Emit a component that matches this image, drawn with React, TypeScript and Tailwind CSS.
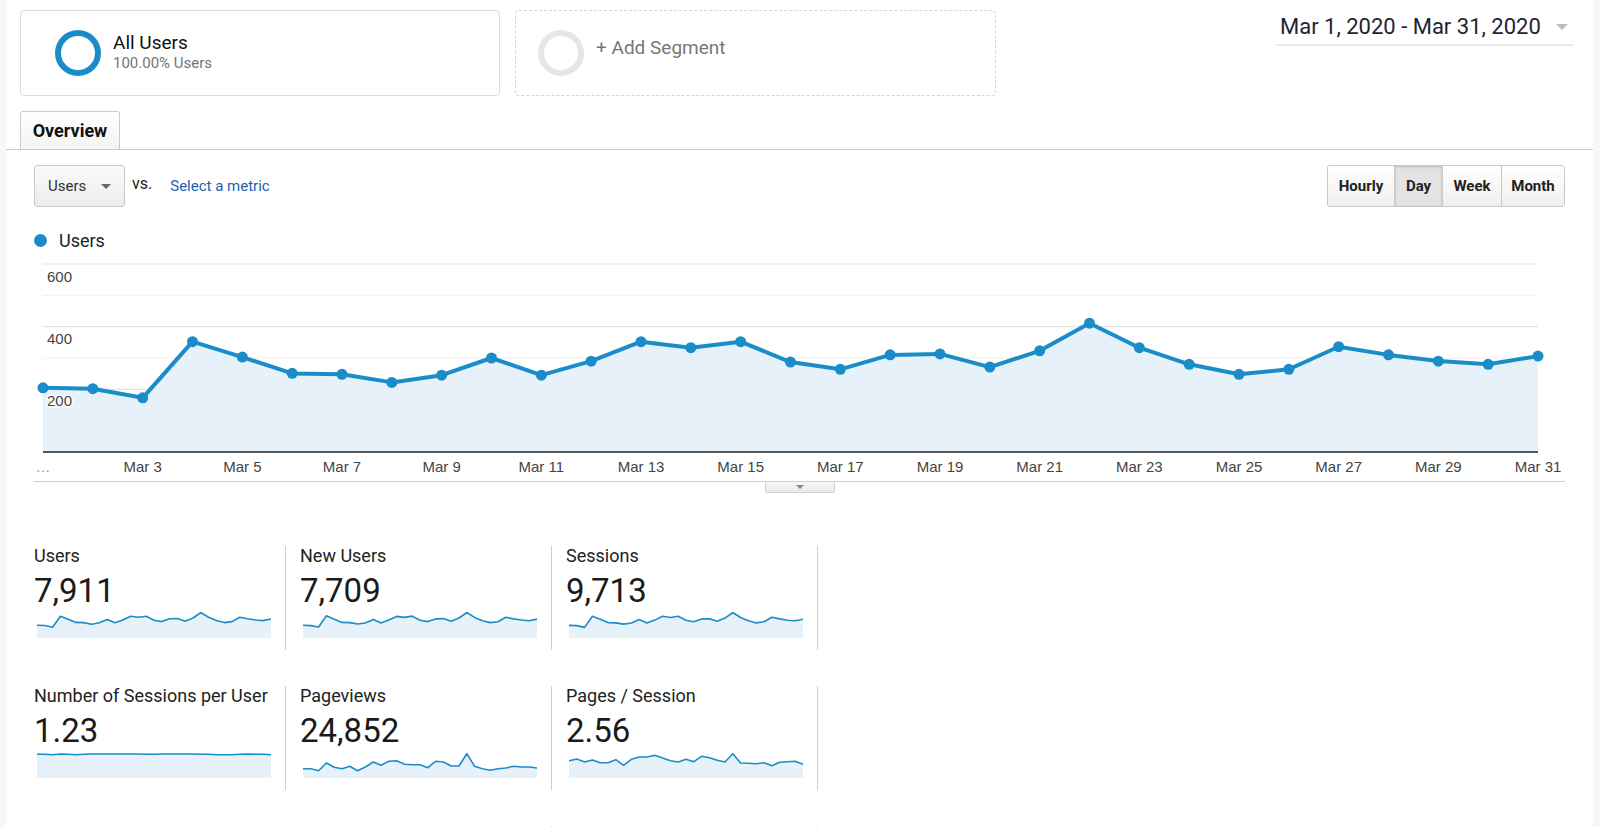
import React from "react";

const users = [205, 202, 173, 352, 303, 251, 248, 222, 245, 300, 245, 290, 352, 333, 352, 287, 264, 310, 313, 271, 323, 411, 333, 280, 248, 264, 336, 310, 290, 280, 306];
const newUsers = [205, 198, 176, 355, 300, 250, 246, 224, 240, 296, 242, 288, 345, 330, 350, 284, 262, 305, 310, 268, 320, 408, 330, 276, 246, 260, 332, 306, 288, 276, 302];
const sessions = [250, 245, 210, 430, 370, 305, 300, 275, 298, 365, 300, 355, 430, 405, 430, 350, 320, 378, 382, 330, 395, 505, 405, 340, 300, 320, 410, 378, 352, 340, 372];

const norm = (arr: number[]) => {
  const m = Math.max(...arr);
  return arr.map((v) => (25.5 * v) / m);
};

const spu = [23.7, 23.7, 23.3, 24, 23.7, 23.3, 23.7, 24, 24, 24, 24, 24, 24, 24, 23.7, 23.7, 24, 24, 24, 24, 24, 23.7, 23.7, 23.3, 23.3, 23.3, 23.7, 24, 23.7, 23.7, 23.3];
const pageviews = [9.3, 9.3, 7.3, 15, 10.7, 9.3, 11.7, 7.3, 11, 16, 12.7, 16.7, 17.3, 13.7, 13.3, 13.3, 10.3, 16.7, 16, 12, 12, 24.3, 11.7, 9.3, 7.7, 9.3, 10, 11.7, 11, 11, 10];
const pps = [17.3, 19, 16, 18, 15.3, 15.3, 18.3, 12.7, 18.7, 21, 21, 22.7, 20, 17.3, 16, 18.7, 16.3, 21.7, 20.3, 17.7, 16, 24.3, 15, 14.7, 14.3, 15.3, 12.3, 15.7, 16.3, 16.7, 13.7];

const X0 = 9;
const X1 = 1504;
const BASE = 197;
const px = (i: number) => X0 + (i * (X1 - X0)) / 30;
const py = (v: number) => BASE - (v * 188) / 600;

function MainChart() {
  const pts = users.map((v, i) => [px(i), py(v)]);
  const line = pts.map((p, i) => `${i ? "L" : "M"}${p[0].toFixed(1)},${p[1].toFixed(1)}`).join(" ");
  const area = `${line} L${X1},${BASE} L${X0},${BASE} Z`;
  const grid = [6, 5, 4, 3, 2, 1].map((k) => ({ k, y: BASE - (k * 188) / 6 }));
  const labelFont = "'Liberation Sans', Arial, sans-serif";
  return (
    <svg width={1531} height={226} viewBox="0 0 1531 226" className="block">
      {grid.map((g) => (
        <line key={g.k} x1={X0} x2={X1} y1={g.y} y2={g.y} stroke={g.k % 2 === 0 ? "#e4e4e4" : "#f2f2f2"} strokeWidth={1.2} />
      ))}
      <path d={area} fill="#e6f1f9" />
      <line x1={X0} x2={X1} y1={BASE} y2={BASE} stroke="#222" strokeWidth={1.6} />
      <path d={line} fill="none" stroke="#1a8dc8" strokeWidth={4} strokeLinejoin="round" strokeLinecap="round" />
      {pts.map((p, i) => (
        <circle key={i} cx={p[0]} cy={p[1]} r={5.5} fill="#1a8dc8" />
      ))}
      {[
        { t: "600", y: 27 },
        { t: "400", y: 89 },
        { t: "200", y: 151 },
      ].map((l) => (
        <text key={l.t} x={13} y={l.y} fontSize={15} fontFamily={labelFont} fill="#444" stroke="#fff" strokeWidth={3} paintOrder="stroke">
          {l.t}
        </text>
      ))}
      <text x={px(0)} y={217} fontSize={15} fontFamily={labelFont} fill="#999" textAnchor="middle">
        …
      </text>
      {Array.from({ length: 15 }, (_, k) => 2 * k + 2).map((i) => (
        <text key={i} x={px(i)} y={217} fontSize={15} fontFamily={labelFont} fill="#444" textAnchor="middle">
          {`Mar ${i + 1}`}
        </text>
      ))}
    </svg>
  );
}

function Spark({ h }: { h: number[] }) {
  const w = 234;
  const ht = 26;
  const pts = h.map((v, i) => [(i * w) / (h.length - 1), ht - v]);
  const line = pts.map((p, i) => `${i ? "L" : "M"}${p[0].toFixed(1)},${p[1].toFixed(1)}`).join(" ");
  const area = `${line} L${w},${ht} L0,${ht} Z`;
  return (
    <svg width={w} height={ht} viewBox={`0 0 ${w} ${ht}`} className="block ml-[3px]">
      <path d={area} fill="#e6f1f9" />
      <path d={line} fill="none" stroke="#1a8dc8" strokeWidth={1.6} strokeLinejoin="round" />
    </svg>
  );
}

function Metric({ label, value, data }: { label: string; value: string; data: number[] }) {
  return (
    <div className="w-[266px] h-[104px] border-r border-[#cfcfcf] pl-[14px]">
      <div className="h-[20px] leading-[20px] text-[18px] text-[#222] whitespace-nowrap">{label}</div>
      <div className="mt-[5px] h-[40px] leading-[40px] text-[33px] text-[#1a1a1a]">{value}</div>
      <div className="mt-[1px]">
        <Spark h={data} />
      </div>
    </div>
  );
}

function Caret({ className }: { className: string }) {
  return (
    <svg viewBox="0 0 10 5" className={className}>
      <path d="M0 0 L10 0 L5 5 Z" fill="currentColor" />
    </svg>
  );
}

export default function App() {
  return (
    <div className="flex h-screen w-full overflow-hidden bg-white font-['Roboto',sans-serif] text-[#222]">
      <div className="w-[6px] shrink-0 bg-[#f6f7f9]" />
      <div className="flex-1 min-w-0">
        {/* Header */}
        <div className="flex pt-[10px] pl-[14px] pr-[20px]">
          <div className="flex h-[86px] w-[480px] items-center rounded-[4px] border border-[#dcdcdc] pl-[34px]">
            <div className="h-[46px] w-[46px] rounded-full border-[6px] border-[#1a8dc8]" />
            <div className="ml-[12px] -mt-[2px]">
              <div className="text-[19px] leading-[22px] text-[#111]">All Users</div>
              <div className="text-[15px] leading-[18px] text-[#757575]">100.00% Users</div>
            </div>
          </div>
          <div className="ml-[15px] flex h-[86px] w-[481px] items-center rounded-[4px] border border-dashed border-[#d6d6d6] pl-[22px]">
            <div className="h-[46px] w-[46px] rounded-full border-[6px] border-[#e6e6e6]" />
            <div className="ml-[12px] -mt-[9px] text-[19px] text-[#777]">+ Add Segment</div>
          </div>
          <div className="ml-auto pt-[2px]">
            <div className="flex w-[297px] items-center pl-[4px] pr-[5px]">
              <span className="text-[22px] leading-[30px] text-[#1e2530]">Mar 1, 2020 - Mar 31, 2020</span>
              <Caret className="ml-auto h-[6px] w-[12px] text-[#bdbdbd]" />
            </div>
            <div className="mt-[2px] h-[2px] w-[297px] bg-[#e9e9e9]" />
          </div>
        </div>

        {/* Tabs */}
        <div className="mt-[15px] h-[39px] border-b border-[#cccccc] pl-[14px]">
          <div className="flex h-[38px] w-[100px] items-center justify-center rounded-t-[3px] border border-b-0 border-[#cccccc] bg-linear-to-b from-white to-[#f4f4f4] text-[18px] font-bold text-[#111]">
            Overview
          </div>
        </div>

        {/* Chart area */}
        <div className="px-[28px]">
          <div className="mt-[15px] flex h-[42px] items-center">
            <div className="flex h-[42px] w-[91px] items-center rounded-[3px] border border-[#c8c8c8] bg-linear-to-b from-[#fafafa] to-[#ececec] pl-[13px] pr-[13px] text-[15px] text-[#333]">
              <span>Users</span>
              <Caret className="ml-auto h-[5px] w-[10px] text-[#666]" />
            </div>
            <span className="ml-[7px] -mt-[4px] text-[16px] text-[#222]">vs.</span>
            <span className="ml-[18px] text-[15px] text-[#1d5fae]">Select a metric</span>
            <div className="ml-auto flex h-[42px] overflow-hidden rounded-[3px] border border-[#c8c8c8] text-[15px] font-bold text-[#222]">
              <div className="flex w-[66px] items-center justify-center bg-linear-to-b from-white to-[#efefef]">Hourly</div>
              <div className="flex w-[48px] items-center justify-center border-l border-[#c8c8c8] bg-[#e3e3e3] shadow-[inset_0_1px_3px_rgba(0,0,0,0.18)]">Day</div>
              <div className="flex w-[59px] items-center justify-center border-l border-[#c8c8c8] bg-linear-to-b from-white to-[#efefef]">Week</div>
              <div className="flex w-[63px] items-center justify-center border-l border-[#c8c8c8] bg-linear-to-b from-white to-[#efefef]">Month</div>
            </div>
          </div>

          <div className="mt-[23px] flex h-[20px] items-center">
            <div className="h-[13px] w-[13px] rounded-full bg-[#1a8dc8]" />
            <span className="ml-[12px] text-[18px] text-[#222]">Users</span>
          </div>

          <div className="mt-[5px]">
            <MainChart />
          </div>
          <div className="h-px bg-[#d0d0d0]" />
          <div className="flex justify-center">
            <div className="flex h-[11px] w-[70px] items-center justify-center rounded-b-[3px] border-x border-b border-[#d0d0d0] bg-linear-to-b from-[#f7f7f7] to-[#e9e9e9]">
              <Caret className="h-[4px] w-[8px] text-[#888]" />
            </div>
          </div>
        </div>

        {/* Metrics */}
        <div className="mt-[53px] pl-[14px]">
          <div className="flex">
            <Metric label="Users" value="7,911" data={norm(users)} />
            <Metric label="New Users" value="7,709" data={norm(newUsers)} />
            <Metric label="Sessions" value="9,713" data={norm(sessions)} />
          </div>
          <div className="mt-[36px] flex">
            <Metric label="Number of Sessions per User" value="1.23" data={spu} />
            <Metric label="Pageviews" value="24,852" data={pageviews} />
            <Metric label="Pages / Session" value="2.56" data={pps} />
          </div>
          <div className="mt-[36px] flex">
            <div className="h-[104px] w-[266px] border-r border-[#cfcfcf]" />
            <div className="h-[104px] w-[266px] border-r border-[#cfcfcf]" />
            <div className="h-[104px] w-[266px] border-r border-[#cfcfcf]" />
          </div>
        </div>
      </div>
      <div className="w-[7px] shrink-0 bg-[#f6f7f9]" />
    </div>
  );
}
